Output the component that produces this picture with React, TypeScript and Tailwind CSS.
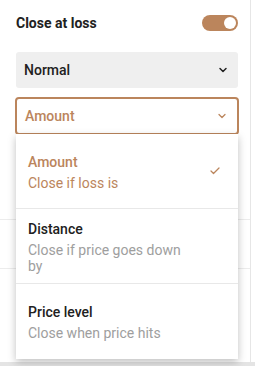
import { ChevronDown, Check } from 'lucide-react';

const options = [
  { title: 'Amount', desc: 'Close if loss is', active: true },
  { title: 'Distance', desc: 'Close if price goes down by', active: false },
  { title: 'Price level', desc: 'Close when price hits', active: false },
];

const App = () => {
  return (
    <div className="w-[255px] h-[366px] bg-white font-['Roboto',sans-serif] text-[#212121] overflow-hidden">
      <div className="relative w-[251px] h-[362px] border-r border-[#e6e6e6]">
        <div className="pl-4 pr-[12px]">
          {/* header */}
          <div className="flex items-center justify-between pt-[14px] h-[32px]">
            <span className="text-[14px] font-bold leading-[18px]">Close at loss</span>
            <button className="flex items-center w-[36px] h-[16px] rounded-full bg-[#bb855c] px-[2px] justify-end">
              <span className="w-[12px] h-[12px] rounded-full bg-white" />
            </button>
          </div>

          {/* mode select */}
          <div className="mt-[20px] flex items-center justify-between h-[36px] bg-[#efefef] rounded-[3px] pl-2 pr-[9px]">
            <span className="text-[14px] font-medium">Normal</span>
            <ChevronDown className="w-[12px] h-[12px] text-[#222]" strokeWidth={3} />
          </div>

          {/* type select */}
          <div className="mt-[9px] -mx-px flex items-center justify-between h-[38px] border-2 border-[#bb855c] rounded-[4px] pl-2 pr-[9px]">
            <span className="text-[14px] font-medium text-[#bb855c]">Amount</span>
            <ChevronDown className="w-[12px] h-[12px] text-[#bb855c]" strokeWidth={2.5} />
          </div>
        </div>

        {/* rows behind the menu */}
        <div className="h-[85px] border-b border-[#ececec]" />
        <div className="h-[49px] border-b border-[#ececec]" />

        {/* menu */}
        <div className="absolute left-4 top-[134px] w-[222px] bg-white shadow-[0_3px_8px_rgba(0,0,0,0.25)]">
          {options.map((o, i) => (
            <div
              key={o.title}
              className={`flex items-center justify-between h-[75px] pl-3 pr-[17px] ${i < options.length - 1 ? 'border-b border-[#e8e8e8]' : ''}`}>
              <div className="w-[158px]">
                <p className={`text-[14px] font-medium leading-[20px] ${o.active ? 'text-[#bb855c]' : 'text-[#212121]'}`}>
                  {o.title}
                </p>
                <p className={`mt-[3px] text-[14px] leading-[16px] ${o.active ? 'text-[#bb855c]' : 'text-[#9e9e9e]'}`}>
                  {o.desc}
                </p>
              </div>
              {o.active && <Check className="w-[12px] h-[12px] text-[#bb855c]" strokeWidth={2.5} />}
            </div>
          ))}
        </div>
      </div>
      <div className="h-[4px] bg-[#e4e4e4]" />
    </div>
  );
};

export default App;
